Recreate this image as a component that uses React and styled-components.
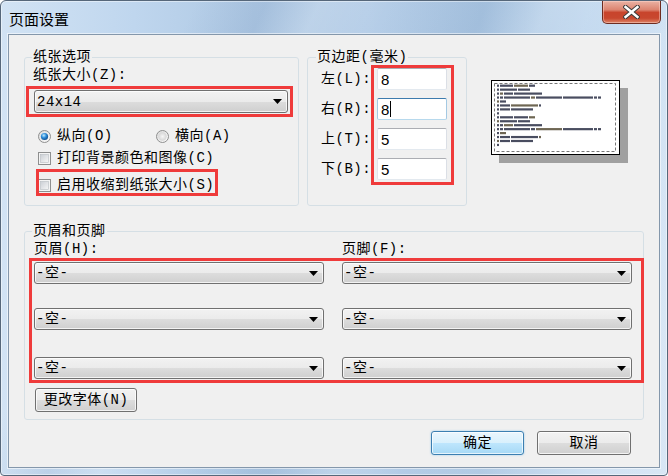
import React from 'react';
import styled, { createGlobalStyle } from 'styled-components';

const UI_FONT = `"Liberation Mono", "Noto Sans CJK SC", monospace`;

const GlobalStyle = createGlobalStyle`
  html, body { margin: 0; padding: 0; background: #ffffff; }
  body { font-family: ${UI_FONT}; }
  * { box-sizing: border-box; }
`;

const Window = styled.div`
  width: 668px;
  height: 476px;
  border: 1px solid #56677a;
  border-radius: 6px 6px 4px 4px;
  overflow: hidden;
  display: flex;
  flex-direction: column;
  font-family: ${UI_FONT};
  font-size: 14px;
  letter-spacing: 0.5px;
  color: #000;
  background:
    linear-gradient(115deg, rgba(255,255,255,0) 0%, rgba(255,255,255,0) 22%, rgba(120,150,190,0.18) 30%, rgba(255,255,255,0.15) 36%, rgba(255,255,255,0) 44%, rgba(110,145,185,0.15) 55%, rgba(255,255,255,0.12) 62%, rgba(255,255,255,0) 70%, rgba(255,255,255,0.2) 92%),
    linear-gradient(90deg, #d2e3f4 0%, #bfd6ee 20%, #aec8e3 38%, #b6cee8 55%, #abc6e2 72%, #c3d9ef 88%, #cfe1f3 100%);
  box-shadow: inset 0 0 0 1px rgba(255,255,255,0.45);
`;

const TitleBar = styled.header`
  height: 33px;
  display: flex;
  align-items: flex-start;
  flex-shrink: 0;
`;

const Title = styled.h1`
  margin: 8px 0 0 8px;
  font-family: "Noto Sans CJK SC", sans-serif;
  font-weight: 400;
  font-size: 15px;
  line-height: 20px;
  letter-spacing: 0;
  color: #000;
`;

const CloseButton = styled.div`
  margin-left: auto;
  margin-right: 6px;
  width: 59px;
  height: 23px;
  border: 1px solid #6e2c20;
  border-top: none;
  border-radius: 0 0 5px 5px;
  background: linear-gradient(#eab2a4 0%, #dc8470 40%, #c8442c 52%, #c8472e 78%, #dd8466 100%);
  box-shadow: inset 0 0 0 1px rgba(255,220,210,0.45);
  display: flex;
  align-items: center;
  justify-content: center;
`;

const Client = styled.main`
  flex: 1;
  margin: 0 7px 7px 7px;
  border: 1px solid #8497ab;
  background: #f0f0f0;
  padding: 14px 15px 0 15px;
  display: flex;
  flex-direction: column;
  box-shadow: 0 0 0 1px rgba(255,255,255,0.55);
`;

const TopRow = styled.div`
  display: flex;
  align-items: flex-start;
`;

const Group = styled.fieldset`
  margin: 0;
  min-width: 0;
  width: ${p => (p.$w ? `${p.$w}px` : 'auto')};
  border: 1px solid #d5dfe5;
  border-radius: 3px;
  padding: ${p => p.$pad};
  margin-right: ${p => p.$mr || 0}px;
  margin-top: ${p => p.$mt || 0}px;
`;

const Legend = styled.legend`
  padding: 0 1px;
  margin-left: ${p => p.$ml}px;
  line-height: 16px;
  font-size: 14px;
`;

const Label = styled.div`
  height: 16px;
  line-height: 16px;
  white-space: nowrap;
  margin-left: ${p => p.$ml || 0}px;
`;

const Highlight = styled.div`
  position: relative;
  margin-top: ${p => p.$mt || 0}px;
  margin-left: ${p => p.$ml || 0}px;
  align-self: ${p => p.$self || 'stretch'};
  width: ${p => (p.$fit ? 'fit-content' : 'auto')};
  &::after {
    content: '';
    position: absolute;
    top: ${p => p.$t}px;
    left: ${p => p.$l}px;
    right: ${p => p.$r}px;
    bottom: ${p => p.$b}px;
    border: 3px solid #ef3b3b;
    pointer-events: none;
  }
`;

const ComboBox = styled.div`
  width: ${p => p.$w}px;
  height: ${p => p.$h}px;
  margin-left: ${p => p.$ml || 0}px;
  border: 1px solid #707070;
  border-radius: 3px;
  background: linear-gradient(#f2f2f2 0%, #ebebeb 50%, #dddddd 50%, #cfcfcf 100%);
  box-shadow: inset 0 0 0 1px rgba(255,255,255,0.75);
  display: flex;
  align-items: center;
  justify-content: space-between;
  padding: 0 5px 0 ${p => p.$pl}px;
`;

const ComboText = styled.span`
  line-height: 16px;
  white-space: nowrap;
`;

const Arrow = styled.svg`
  display: block;
  flex-shrink: 0;
`;

const Combo = ({ value, w, h = 22, pl = 2, ml }) => (
  <ComboBox $w={w} $h={h} $pl={pl} $ml={ml}>
    <ComboText>{value}</ComboText>
    <Arrow width="9" height="5" viewBox="0 0 9 5">
      <path d="M0 0H9L4.5 5Z" fill="#000" />
    </Arrow>
  </ComboBox>
);

const OptionRow = styled.div`
  display: flex;
  align-items: center;
  height: 16px;
  margin-top: ${p => p.$mt}px;
  padding-left: 5px;
  width: ${p => (p.$fit ? 'fit-content' : 'auto')};
`;

const OptionItem = styled.label`
  display: flex;
  align-items: center;
  gap: 6px;
  width: ${p => (p.$w ? `${p.$w}px` : 'auto')};
  white-space: nowrap;
  line-height: 16px;
`;

const Icon = styled.svg`
  display: block;
  flex-shrink: 0;
`;

const Radio = ({ checked }) => (
  <Icon width="13" height="13" viewBox="0 0 13 13">
    <defs>
      <linearGradient id="rbg" x1="0" y1="0" x2="1" y2="1">
        <stop offset="0" stopColor="#d9d9d9" />
        <stop offset="1" stopColor="#fdfdfd" />
      </linearGradient>
      <radialGradient id="rdot" cx="0.4" cy="0.35" r="0.75">
        <stop offset="0" stopColor="#c6ecfc" />
        <stop offset="0.45" stopColor="#2a8bd9" />
        <stop offset="1" stopColor="#0a3d78" />
      </radialGradient>
      <radialGradient id="roff" cx="0.5" cy="0.5" r="0.6">
        <stop offset="0" stopColor="#f6f6f6" />
        <stop offset="1" stopColor="#cfcfcf" />
      </radialGradient>
    </defs>
    <circle cx="6.5" cy="6.5" r="6" fill="url(#rbg)" stroke="#8e8f8f" />
    <circle cx="6.5" cy="6.5" r={checked ? 3.6 : 4.2} fill={checked ? 'url(#rdot)' : 'url(#roff)'} />
  </Icon>
);

const Checkbox = () => (
  <Icon width="13" height="13" viewBox="0 0 13 13">
    <defs>
      <linearGradient id="cbg" x1="0" y1="0" x2="1" y2="1">
        <stop offset="0" stopColor="#cbcfd5" />
        <stop offset="1" stopColor="#f7f7f7" />
      </linearGradient>
    </defs>
    <rect x="0.5" y="0.5" width="12" height="12" fill="#f4f4f4" stroke="#8e8f8f" />
    <rect x="2.5" y="2.5" width="8" height="8" fill="url(#cbg)" stroke="#b8bcc2" strokeWidth="0.6" />
  </Icon>
);

const MarginBody = styled.div`
  display: flex;
`;

const MarginLabels = styled.div`
  width: 56px;
  display: flex;
  flex-direction: column;
  gap: 8px;
`;

const MarginLabel = styled.div`
  height: 22px;
  line-height: 22px;
  white-space: nowrap;
`;

const MarginInputs = styled.div`
  display: flex;
  flex-direction: column;
  gap: 8px;
`;

const TextInput = styled.div`
  width: 70px;
  height: 22px;
  border: 1px solid;
  border-color: ${p => (p.$focus ? '#3d7bad #a4c9e3 #b7d9ed #a4c9e3' : '#abadb3 #dbdfe6 #e3e9ef #e2e3ea')};
  border-radius: 2px;
  background: #fff;
  padding-left: 3px;
  display: flex;
  align-items: center;
  font-family: "Liberation Sans", "DejaVu Sans", sans-serif;
  font-size: 15px;
  letter-spacing: 0;
`;

const Caret = styled.span`
  display: inline-block;
  width: 1px;
  height: 16px;
  background: #000;
  margin-left: 1px;
`;

const Preview = styled.svg`
  display: block;
  margin-left: 24px;
  margin-top: 31px;
  flex-shrink: 0;
`;

const HFLabels = styled.div`
  display: grid;
  grid-template-columns: 290px 290px;
  column-gap: 18px;
`;

const HFRow = styled.div`
  display: grid;
  grid-template-columns: 290px 290px;
  column-gap: 18px;
  margin-top: ${p => p.$mt || 0}px;
`;

const HFStack = styled.div`
  display: flex;
  flex-direction: column;
`;

const Button = styled.button`
  width: ${p => p.$w}px;
  height: 24px;
  margin: ${p => p.$m || 0};
  padding: 0;
  font-family: ${UI_FONT};
  font-size: 14px;
  letter-spacing: 0.5px;
  color: #000;
  border: 1px solid ${p => (p.$primary ? '#3c7fb1' : '#707070')};
  border-radius: 3px;
  background: ${p =>
    p.$primary
      ? 'linear-gradient(#eaf6fd 0%, #d9f0fc 50%, #bee6fd 50%, #a7d9f5 100%)'
      : 'linear-gradient(#f2f2f2 0%, #ebebeb 50%, #dddddd 50%, #cfcfcf 100%)'};
  box-shadow: ${p =>
    p.$primary
      ? 'inset 0 0 0 1px rgba(255,255,255,0.7), 0 0 2px rgba(80,170,230,0.6)'
      : 'inset 0 0 0 1px rgba(255,255,255,0.75)'};
  display: flex;
  align-items: center;
  justify-content: center;
  line-height: 16px;
  white-space: nowrap;
`;

const DialogButtons = styled.div`
  display: flex;
  justify-content: flex-end;
  gap: 13px;
  margin-top: 11px;
  padding-right: 13px;
`;

const PREVIEW_LINES = [
  [[6, 2], [9, 13], [23, 14], [38, 6]],
  [[6, 2], [9, 17], [27, 12]],
  [[6, 2], [9, 3], [13, 9], [23, 28]],
  [[6, 2], [9, 3], [13, 26], [40, 4], [45, 26], [72, 30], [103, 3], [107, 3]],
  [[6, 2], [9, 6]],
  [[6, 2], [9, 10], [20, 27], [48, 2]],
  [[6, 2], [9, 10], [20, 22]],
  [[6, 2]],
  [[6, 2], [9, 13], [23, 14], [38, 6]],
  [[6, 2], [9, 17], [27, 12]],
  [[6, 2], [9, 3], [13, 9], [23, 28]],
  [[6, 2], [9, 3], [13, 26], [40, 4], [45, 26], [72, 30], [103, 3], [107, 3]],
  [[6, 2], [9, 6]],
  [[6, 2], [9, 10], [20, 27], [48, 2]],
  [[6, 2], [9, 10], [20, 22]],
  [[6, 2]],
];

const PagePreview = () => (
  <Preview width="137" height="83" viewBox="0 0 137 83">
    <rect x="8" y="8" width="129" height="75" fill="#a0a0a0" />
    <rect x="0.5" y="0.5" width="128" height="74" fill="#ffffff" stroke="#000" />
    <line x1="128.5" y1="0" x2="128.5" y2="75" stroke="#000" />
    <line x1="0" y1="74.5" x2="129" y2="74.5" stroke="#000" />
    <rect x="3.5" y="3.5" width="121" height="68" fill="none" stroke="#777" strokeDasharray="3 2" />
    {PREVIEW_LINES.map((segs, i) =>
      segs.map(([x, w], j) => (
        <rect
          key={`${i}-${j}`}
          x={x}
          y={4.6 + i * 3.95}
          width={w}
          height="2.2"
          fill={(i * 3 + j) % 5 === 2 ? '#4a4028' : '#1c2038'}
          opacity="0.8"
        />
      ))
    )}
  </Preview>
);

export default function App() {
  return (
    <>
      <GlobalStyle />
      <Window>
        <TitleBar>
          <Title>页面设置</Title>
          <CloseButton>
            <svg width="17" height="14" viewBox="0 0 17 14">
              <path d="M2.5 2L14.5 12M14.5 2L2.5 12" stroke="#3b3b3b" strokeWidth="4.4" strokeLinecap="square" />
              <path d="M2.5 2L14.5 12M14.5 2L2.5 12" stroke="#ffffff" strokeWidth="2.4" strokeLinecap="square" />
            </svg>
          </CloseButton>
        </TitleBar>
        <Client>
          <TopRow>
            <Group $w={275} $mr={8} $pad="2px 9px 12px 8px">
              <Legend $ml={-1}>纸张选项</Legend>
              <Label>纸张大小(Z):</Label>
              <Highlight $mt={7} $t={-4} $l={-8} $r={-4} $b={-4} $ml={1} $self="flex-start">
                <Combo value="24x14" w={254} h={23} pl={2} />
              </Highlight>
              <OptionRow $mt={15}>
                <OptionItem $w={118}>
                  <Radio checked />
                  纵向(O)
                </OptionItem>
                <OptionItem>
                  <Radio />
                  横向(A)
                </OptionItem>
              </OptionRow>
              <OptionRow $mt={6}>
                <OptionItem>
                  <Checkbox />
                  打印背景颜色和图像(C)
                </OptionItem>
              </OptionRow>
              <Highlight $mt={11} $t={-8} $l={3} $r={-4} $b={-3} $self="flex-start" $fit>
                <OptionRow $mt={0} $fit>
                  <OptionItem>
                    <Checkbox />
                    启用收缩到纸张大小(S)
                  </OptionItem>
                </OptionRow>
              </Highlight>
            </Group>

            <Group $w={160} $pad="3px 19px 25px 13px">
              <Legend $ml={-5}>页边距(毫米)</Legend>
              <MarginBody>
                <MarginLabels>
                  <MarginLabel>左(L):</MarginLabel>
                  <MarginLabel>右(R):</MarginLabel>
                  <MarginLabel>上(T):</MarginLabel>
                  <MarginLabel>下(B):</MarginLabel>
                </MarginLabels>
                <Highlight $t={-3} $l={-6} $r={-7} $b={-5}>
                  <MarginInputs>
                    <TextInput>8</TextInput>
                    <TextInput $focus>
                      8<Caret />
                    </TextInput>
                    <TextInput>5</TextInput>
                    <TextInput>5</TextInput>
                  </MarginInputs>
                </Highlight>
              </MarginBody>
            </Group>

            <PagePreview />
          </TopRow>

          <Group $mt={17} $pad="2px 11px 7px 9px">
            <Legend $ml={-2}>页眉和页脚</Legend>
            <HFLabels>
              <Label>页眉(H):</Label>
              <Label>页脚(F):</Label>
            </HFLabels>
            <Highlight $mt={5} $t={-4} $l={-5} $r={-12} $b={-4}>
              <HFStack>
                <HFRow>
                  <Combo value="-空-" w={290} pl={1} />
                  <Combo value="-空-" w={290} pl={1} />
                </HFRow>
                <HFRow $mt={24}>
                  <Combo value="-空-" w={290} pl={1} />
                  <Combo value="-空-" w={290} pl={1} />
                </HFRow>
                <HFRow $mt={27}>
                  <Combo value="-空-" w={290} pl={1} />
                  <Combo value="-空-" w={290} pl={1} />
                </HFRow>
              </HFStack>
            </Highlight>
            <Button $w={102} $m="9px 0 0 1px">更改字体(N)</Button>
          </Group>

          <DialogButtons>
            <Button $w={93} $primary>确定</Button>
            <Button $w={94}>取消</Button>
          </DialogButtons>
        </Client>
      </Window>
    </>
  );
}
